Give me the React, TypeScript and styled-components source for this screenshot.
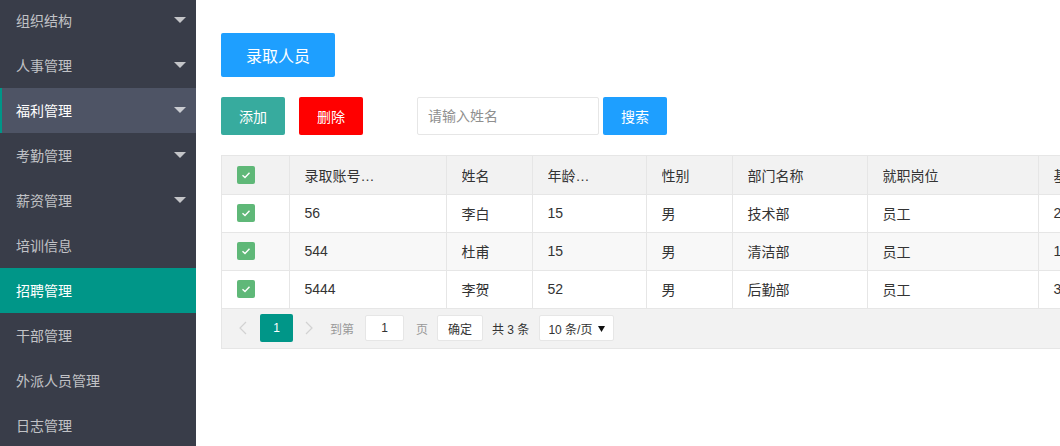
import React from "react";
import styled, { createGlobalStyle } from "styled-components";

const GlobalStyle = createGlobalStyle`
  html, body {
    margin: 0;
    padding: 0;
    background: #fff;
    overflow: hidden;
  }
  body {
    font-family: "Liberation Sans", "Noto Sans CJK SC", sans-serif;
    color: #333;
  }
  * {
    box-sizing: border-box;
  }
`;

const Layout = styled.div`
  display: flex;
  width: 1060px;
  height: 446px;
  overflow: hidden;
`;

const Sidebar = styled.nav`
  width: 196px;
  flex-shrink: 0;
  height: 446px;
  background: #393d49;
  overflow: hidden;
`;

const NavList = styled.ul`
  list-style: none;
  margin: -2px 0 0;
  padding: 0;
`;

const NavItem = styled.li<{ $state?: "open" | "active" }>`
  position: relative;
  height: 45px;
  display: flex;
  align-items: center;
  padding-bottom: 1px;
  font-size: 14px;
  color: ${(p) => (p.$state ? "#fff" : "rgba(255, 255, 255, 0.7)")};
  background: ${(p) =>
    p.$state === "active" ? "#009688" : p.$state === "open" ? "#4e5465" : "transparent"};
  border-left: ${(p) => (p.$state === "open" ? "2px solid #009688" : "none")};
  padding-left: ${(p) => (p.$state === "open" ? "14px" : "16px")};
`;

const NavMore = styled.span`
  position: absolute;
  right: 10px;
  top: 19px;
  width: 0;
  height: 0;
  border-left: 6px solid transparent;
  border-right: 6px solid transparent;
  border-top: 6px solid rgba(255, 255, 255, 0.7);
`;

const Main = styled.main`
  flex: 1;
  min-width: 0;
  overflow: hidden;
  padding: 33px 0 0 25px;
`;

const Btn = styled.button<{ $color: string; $lg?: boolean }>`
  height: ${(p) => (p.$lg ? "44px" : "38px")};
  padding: 0 ${(p) => (p.$lg ? "25px" : "18px")};
  font-size: ${(p) => (p.$lg ? "16px" : "14px")};
  font-family: inherit;
  color: #fff;
  background: ${(p) => p.$color};
  border: none;
  border-radius: 2px;
  white-space: nowrap;
  cursor: pointer;
`;

const Toolbar = styled.div`
  display: flex;
  align-items: center;
  margin-top: 20px;
  height: 38px;
`;

const SearchInput = styled.input`
  width: 182px;
  height: 38px;
  margin-left: 54px;
  margin-right: 4px;
  padding-left: 10px;
  border: 1px solid #e6e6e6;
  border-radius: 2px;
  font-size: 14px;
  font-family: inherit;
  outline: none;
  &::placeholder {
    color: #8f8f8f;
  }
`;

const Gap = styled.span<{ $w: number }>`
  display: inline-block;
  flex-shrink: 0;
  width: ${(p) => p.$w}px;
`;

const TableWrap = styled.div`
  margin-top: 20px;
  width: 1100px;
  border-left: 1px solid #e6e6e6;
  border-top: 1px solid #e6e6e6;
`;

const Table = styled.table`
  border-collapse: collapse;
  table-layout: fixed;
  width: 1099px;
  font-size: 14px;
  color: #333;
`;

const HeadRow = styled.tr`
  background: #f2f2f2;
`;

const Row = styled.tr<{ $even?: boolean }>`
  background: ${(p) => (p.$even ? "#f8f8f8" : "#fff")};
`;

const Th = styled.th`
  height: 38px;
  padding: 0 15px;
  text-align: left;
  font-weight: normal;
  border-right: 1px solid #e6e6e6;
  border-bottom: 1px solid #e6e6e6;
  white-space: nowrap;
  overflow: hidden;
`;

const Title = styled.span<{ $max?: number }>`
  display: block;
  max-width: ${(p) => (p.$max ? `${p.$max}px` : "none")};
  white-space: nowrap;
  overflow: hidden;
  text-overflow: ellipsis;
`;

const Td = styled.td`
  height: 38px;
  padding: 0 15px;
  border-right: 1px solid #e6e6e6;
  border-bottom: 1px solid #e6e6e6;
  white-space: nowrap;
  overflow: hidden;
  text-overflow: ellipsis;
`;

const CheckCell = styled.div`
  display: flex;
  align-items: center;
`;

const CheckBox = styled.span`
  display: inline-flex;
  align-items: center;
  justify-content: center;
  width: 18px;
  height: 18px;
  border-radius: 2px;
  background: #5fb878;
`;

const PageBar = styled.div`
  display: flex;
  align-items: center;
  width: 1100px;
  height: 40px;
  padding-left: 5px;
  background: #f2f2f2;
  border-left: 1px solid #e6e6e6;
  border-bottom: 1px solid #e6e6e6;
  font-size: 12px;
  color: #999;
`;

const PageArrow = styled.span`
  display: inline-flex;
  align-items: center;
  justify-content: center;
  width: 32px;
  height: 28px;
  margin-right: 1px;
`;

const PageCurrent = styled.span`
  display: inline-flex;
  align-items: center;
  justify-content: center;
  width: 33px;
  height: 28px;
  border-radius: 2px;
  background: #009688;
  color: #fff;
  font-size: 12px;
`;

const PageText = styled.span<{ $dark?: boolean }>`
  color: ${(p) => (p.$dark ? "#333" : "#999")};
  white-space: nowrap;
`;

const PageInput = styled.input`
  width: 39px;
  height: 26px;
  border: 1px solid #e6e6e6;
  border-radius: 2px;
  background: #fff;
  text-align: center;
  font-size: 12px;
  font-family: inherit;
  color: #333;
  outline: none;
`;

const PageBtn = styled.button`
  height: 26px;
  width: 46px;
  padding: 0;
  border: 1px solid #e6e6e6;
  border-radius: 2px;
  background: #fff;
  font-size: 12px;
  font-family: inherit;
  color: #333;
`;

const PageSelect = styled.span`
  display: inline-flex;
  align-items: center;
  justify-content: space-between;
  width: 75px;
  height: 26px;
  padding: 0 8px 0 8px;
  border: 1px solid #e6e6e6;
  border-radius: 2px;
  background: #fff;
  color: #333;
  font-size: 12px;
`;

const navItems: { label: string; more?: boolean; state?: "open" | "active" }[] = [
  { label: "组织结构", more: true },
  { label: "人事管理", more: true },
  { label: "福利管理", more: true, state: "open" },
  { label: "考勤管理", more: true },
  { label: "薪资管理", more: true },
  { label: "培训信息" },
  { label: "招聘管理", state: "active" },
  { label: "干部管理" },
  { label: "外派人员管理" },
  { label: "日志管理" },
];

const columns: { title: string; width: number; max?: number }[] = [
  { title: "", width: 67 },
  { title: "录取账号名称", width: 157, max: 72 },
  { title: "姓名", width: 86 },
  { title: "年龄范围", width: 114, max: 44 },
  { title: "性别", width: 86 },
  { title: "部门名称", width: 135 },
  { title: "就职岗位", width: 171 },
  { title: "基本工资", width: 283 },
];

const rows = [
  ["56", "李白", "15", "男", "技术部", "员工", "2000"],
  ["544", "杜甫", "15", "男", "清洁部", "员工", "1000"],
  ["5444", "李贺", "52", "男", "后勤部", "员工", "3000"],
];

function Check() {
  return (
    <CheckBox>
      <svg width="12" height="12" viewBox="0 0 12 12">
        <polyline
          points="2.5,6.2 5,8.5 9.5,3.8"
          fill="none"
          stroke="#fff"
          strokeWidth="1.4"
        />
      </svg>
    </CheckBox>
  );
}

function Chevron({ dir }: { dir: "left" | "right" }) {
  return (
    <svg width="8" height="14" viewBox="0 0 8 14">
      <polyline
        points={dir === "left" ? "7,1 1,7 7,13" : "1,1 7,7 1,13"}
        fill="none"
        stroke="#d2d2d2"
        strokeWidth="1.2"
      />
    </svg>
  );
}

export default function App() {
  return (
    <>
      <GlobalStyle />
      <Layout>
        <Sidebar>
          <NavList>
            {navItems.map((item) => (
              <NavItem key={item.label} $state={item.state}>
                {item.label}
                {item.more ? <NavMore /> : null}
              </NavItem>
            ))}
          </NavList>
        </Sidebar>
        <Main>
          <Btn $color="#1e9fff" $lg>
            录取人员
          </Btn>
          <Toolbar>
            <Btn $color="#37ab9e">添加</Btn>
            <Gap $w={14} />
            <Btn $color="#ff0000">删除</Btn>
            <SearchInput placeholder="请输入姓名" />
            <Btn $color="#1e9fff">搜索</Btn>
          </Toolbar>
          <TableWrap>
            <Table>
              <colgroup>
                {columns.map((c, i) => (
                  <col key={i} style={{ width: c.width }} />
                ))}
              </colgroup>
              <thead>
                <HeadRow>
                  {columns.map((c, i) => (
                    <Th key={i}>
                      {i === 0 ? (
                        <CheckCell>
                          <Check />
                        </CheckCell>
                      ) : (
                        <Title $max={c.max}>{c.title}</Title>
                      )}
                    </Th>
                  ))}
                </HeadRow>
              </thead>
              <tbody>
                {rows.map((r, ri) => (
                  <Row key={ri} $even={ri % 2 === 1}>
                    <Td>
                      <CheckCell>
                        <Check />
                      </CheckCell>
                    </Td>
                    {r.map((v, ci) => (
                      <Td key={ci}>{v}</Td>
                    ))}
                  </Row>
                ))}
              </tbody>
            </Table>
          </TableWrap>
          <PageBar>
            <PageArrow>
              <Chevron dir="left" />
            </PageArrow>
            <PageCurrent>1</PageCurrent>
            <PageArrow>
              <Chevron dir="right" />
            </PageArrow>
            <Gap $w={4} />
            <PageText>到第</PageText>
            <Gap $w={11} />
            <PageInput defaultValue="1" />
            <Gap $w={12} />
            <PageText>页</PageText>
            <Gap $w={9} />
            <PageBtn>确定</PageBtn>
            <Gap $w={9} />
            <PageText $dark>共 3 条</PageText>
            <Gap $w={10} />
            <PageSelect>
              10 条/页
              <svg width="7" height="7" viewBox="0 0 7 7">
                <polygon points="0,1 7,1 3.5,7" fill="#111" />
              </svg>
            </PageSelect>
          </PageBar>
        </Main>
      </Layout>
    </>
  );
}
